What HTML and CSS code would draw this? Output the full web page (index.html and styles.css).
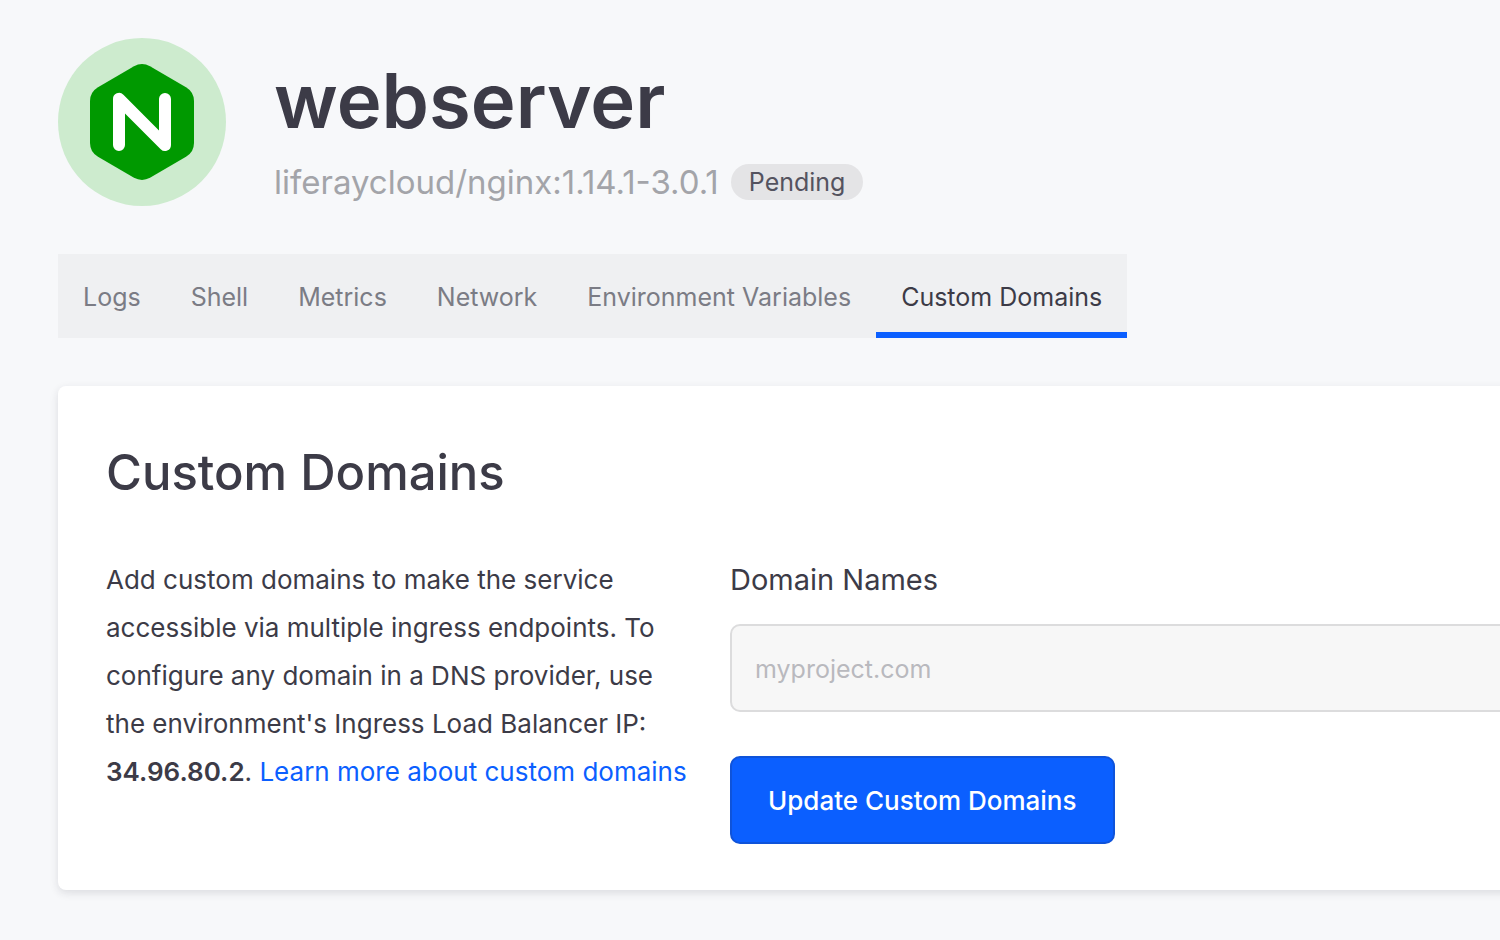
FILE: index.html
```html
<!DOCTYPE html>
<html lang="en">
<head>
<meta charset="utf-8">
<title>webserver – Custom Domains</title>
<meta name="viewport" content="width=device-width, initial-scale=1">
<link rel="stylesheet" href="styles.css">
</head>
<body class="page">
  <header class="service">
    <svg class="service-logo" viewBox="0 0 168 168" role="img" aria-label="nginx">
      <circle cx="84" cy="84" r="84" fill="#cdebce"/>
      <path fill="#009900" d="M76 28.2Q84 24 92 28.2L128 49.2Q136 54 136 63V105Q136 114 128 118.8L92 139.8Q84 144 76 139.8L40 118.8Q32 114 32 105V63Q32 54 40 49.2Z"/>
      <path fill="#fff" d="M67 75.5V107a6 6 0 0 1-12 0V61a6 6 0 0 1 10.4-4.2L101 92.4V61a6 6 0 0 1 12 0V107a6 6 0 0 1-10.3 4.2Z"/>
    </svg>
    <div class="service-info">
      <h1 class="service-name">webserver</h1>
      <div class="service-meta">
        <span class="service-image">liferaycloud/nginx:1.14.1-3.0.1</span>
        <span class="badge">Pending</span>
      </div>
    </div>
  </header>

  <nav class="tabs" aria-label="Service">
    <a class="tab" href="#logs">Logs</a>
    <a class="tab" href="#shell">Shell</a>
    <a class="tab" href="#metrics">Metrics</a>
    <a class="tab" href="#network">Network</a>
    <a class="tab" href="#environment">Environment Variables</a>
    <a class="tab tab-active" href="#domains" aria-current="page">Custom Domains</a>
  </nav>

  <main class="card" id="domains">
    <h2 class="card-title">Custom Domains</h2>
    <div class="card-body">
      <p class="help">Add custom domains to make the service accessible via multiple ingress endpoints. To configure any domain in a DNS provider, use the environment's Ingress Load Balancer IP: <strong class="ip">34.96.80.2</strong>. <a class="link" href="#learn">Learn more about custom domains</a></p>
      <form class="form">
        <label class="label" for="domain">Domain Names</label>
        <input class="input" id="domain" type="text" placeholder="myproject.com">
        <button class="button" type="button">Update Custom Domains</button>
      </form>
    </div>
  </main>
</body>
</html>
```
FILE: styles.css
```css
* {
  box-sizing: border-box;
}

.page {
  margin: 0;
  padding: 38px 0 48px 58px;
  overflow-x: hidden;
  background: #f7f8fa;
  color: #3c3b47;
  font-family: Inter, "Liberation Sans", sans-serif;
  font-size: 25px;
}

.service {
  display: flex;
  align-items: center;
  gap: 48px;
}

.service-logo {
  flex: none;
  width: 168px;
  height: 168px;
}

.service-info {
  padding-top: 16px;
}

.service-name {
  margin: 0;
  font-size: 76px;
  font-weight: 600;
  line-height: 92px;
}

.service-meta {
  display: flex;
  align-items: center;
  gap: 12px;
  margin-top: 12px;
}

.service-image {
  color: #a3a4a9;
  font-size: 33px;
  line-height: 48px;
}

.badge {
  padding: 0 18px;
  border-radius: 18px;
  background: #e4e4e6;
  color: #54535f;
  line-height: 36px;
}

.tabs {
  display: flex;
  width: fit-content;
  margin-top: 48px;
  background: #eff0f2;
}

.tab {
  padding: 8px 25px 0;
  border-bottom: 6px solid transparent;
  color: #7b7c85;
  line-height: 70px;
  text-decoration: none;
  white-space: nowrap;
}

.tab-active {
  border-bottom-color: #0b5fff;
  color: #3c3b47;
}

/* The card runs past the right edge of the window. */
.card {
  margin-top: 48px;
  margin-right: -24px;
  padding: 48px 0 46px 48px;
  border-radius: 8px;
  background: #fff;
  box-shadow: 0 3px 8px rgba(39, 40, 51, 0.13);
}

.card-title {
  margin: 0;
  font-size: 49px;
  font-weight: 500;
  line-height: 78px;
}

.card-body {
  display: grid;
  grid-template-columns: 584px 1fr;
  gap: 40px;
  margin-top: 44px;
}

.help {
  margin: 0;
  font-size: 26px;
  line-height: 48px;
}

.ip {
  font-weight: 600;
}

.link {
  color: #0b5fff;
  text-decoration: none;
}

.form {
  display: flex;
  flex-direction: column;
  align-items: flex-start;
}

.label {
  font-size: 29px;
  line-height: 48px;
}

.input {
  width: 100%;
  height: 88px;
  margin-top: 20px;
  padding: 2px 23px 0;
  border: 2px solid #dcdcdd;
  border-radius: 10px;
  background: #f7f7f7;
  color: #3c3b47;
  font: inherit;
}

.input::placeholder {
  color: #b9b9be;
}

.button {
  height: 88px;
  margin-top: 44px;
  padding: 0 36px;
  border: 2px solid #0f53da;
  border-radius: 10px;
  background: #0b5fff;
  color: #fff;
  font: inherit;
  font-size: 26px;
  font-weight: 500;
}
```
